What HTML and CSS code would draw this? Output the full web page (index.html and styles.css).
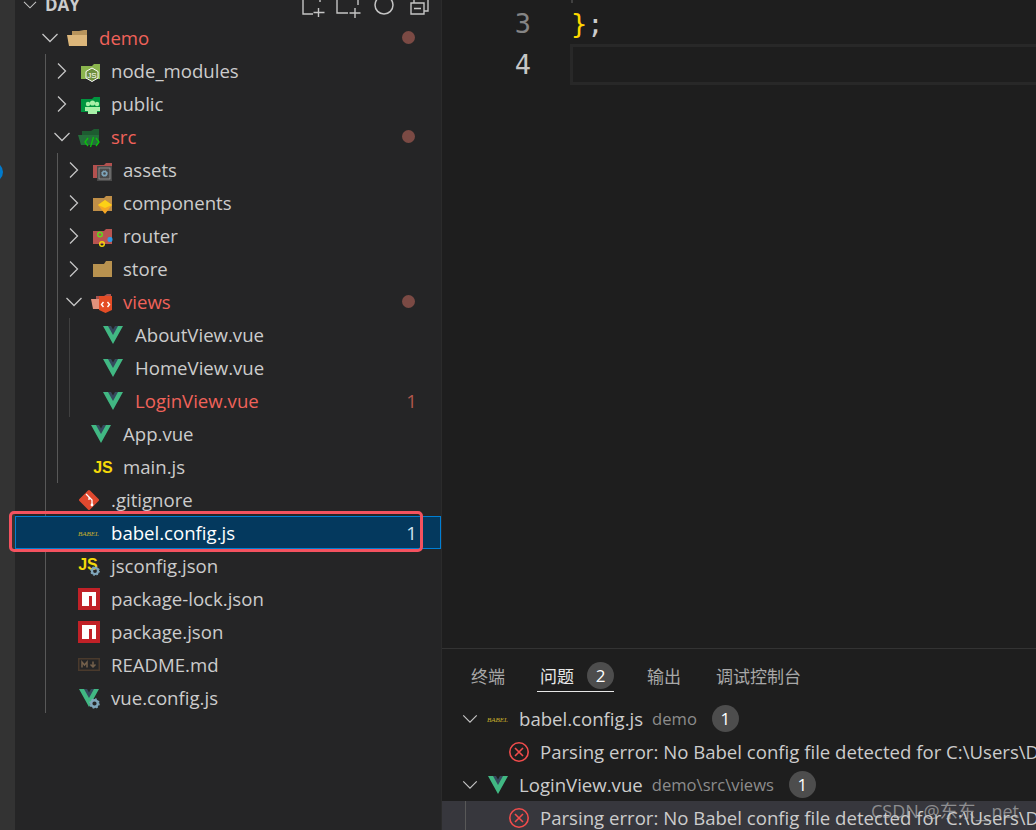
FILE: index.html
```html
<!DOCTYPE html>
<html lang="zh">
<head>
<meta charset="utf-8">
<title>VS Code</title>
<link rel="stylesheet" href="styles.css">
</head>
<body>
<svg class="defs" width="0" height="0">
  <defs>
    <symbol id="chev-r" viewBox="0 0 20 20"><path d="M6 2.5 L13.5 10 L6 17.5" fill="none" stroke="#c5c5c5" stroke-width="1.3"/></symbol>
    <symbol id="chev-d" viewBox="0 0 20 20"><path d="M2.5 6 L10 13.5 L17.5 6" fill="none" stroke="#c5c5c5" stroke-width="1.3"/></symbol>
    <symbol id="gear" viewBox="0 0 10 10"><circle cx="5" cy="5" r="3" fill="none" stroke="#7fa6bb" stroke-width="2.2"/><circle cx="5" cy="5" r="4.2" fill="none" stroke="#7fa6bb" stroke-width="1.2" stroke-dasharray="1.6 1.7"/></symbol>
    <symbol id="vue" viewBox="0 0 22 22"><path d="M1 2 H8 L11 7 L14 2 H21 L11 20 Z" fill="#41b883"/><path d="M6 2 H9 L11 5.5 L13 2 H16 L11 11 Z" fill="#35495e"/></symbol>
    <symbol id="npm" viewBox="0 0 22 22"><rect x="0" y="0" width="22" height="22" fill="#c12127"/><path d="M4 4 H18 V18 H14 V8 H11 V18 H4 Z" fill="#fff"/></symbol>
    <symbol id="err" viewBox="0 0 22 22"><circle cx="11" cy="11" r="9.2" fill="none" stroke="#f14c4c" stroke-width="1.6"/><path d="M7 7 L15 15 M15 7 L7 15" stroke="#f14c4c" stroke-width="1.6"/></symbol>
    <symbol id="babel" viewBox="0 0 22 10"><text x="0" y="8" class="babel-mark">BABEL</text></symbol>
  </defs>
</svg>
<div class="app">
  <div class="activity"><span class="activity-badge"></span></div>
  <aside class="sidebar">
    <div class="explorer-head">
      <svg class="ic20" viewBox="0 0 20 20"><use href="#chev-d"/></svg>
      <span class="explorer-title">DAY</span>
      <div class="head-actions">
        <svg class="act" viewBox="0 0 24 24"><path d="M11 21 H1 V3 H16 M18 3 V9 M16.500 15 V24 M11.500 19.500 H22.500" fill="none" stroke="#c5c5c5" stroke-width="1.400"/></svg>
        <svg class="act" viewBox="0 0 24 24"><path d="M10 20 H-1 V2 H20 V12 M17 15 V25 M11.500 20 H22.500" fill="none" stroke="#c5c5c5" stroke-width="1.400"/></svg>
        <svg class="act" viewBox="0 0 24 24"><circle cx="10" cy="12" r="9" fill="none" stroke="#c5c5c5" stroke-width="1.500"/></svg>
        <svg class="act" viewBox="0 0 24 24"><path d="M1 10 H14 V21 H1 Z M4 10 V6 H18 V18 H14 M4 15.500 H11" fill="none" stroke="#c5c5c5" stroke-width="1.400"/></svg>
      </div>
    </div>
    <div class="tree">
      <span class="guide guide-a"></span>
      <span class="guide guide-b"></span>
      <span class="guide guide-c"></span>

      <div class="row d0 err">
        <svg class="chev" viewBox="0 0 20 20"><use href="#chev-d"/></svg>
        <svg class="ficon" viewBox="0 0 22 22"><path d="M6 8 V4 H13 L18 3 H21 V19 H6 Z" fill="#b8945c"/><path d="M1 8 H21 V19 H3 Z" fill="#dcb67a"/></svg>
        <span class="name">demo</span><span class="dot"></span>
      </div>
      <div class="row d1">
        <svg class="chev" viewBox="0 0 20 20"><use href="#chev-r"/></svg>
        <svg class="ficon" viewBox="0 0 22 22"><path d="M3 6 H14 L16 4 H22 V19 H3 Z" fill="#8bb54e"/><path d="M14 8 L20 11.500 V18 L14 21.500 L8 18 V11.500 Z" fill="#6f8f3f" stroke="#fff" stroke-width="1"/><text x="14" y="18" class="node-mark">JS</text></svg>
        <span class="name">node_modules</span>
      </div>
      <div class="row d1">
        <svg class="chev" viewBox="0 0 20 20"><use href="#chev-r"/></svg>
        <svg class="ficon" viewBox="0 0 22 22"><path d="M3 6 H14 L16 4 H22 V19 H3 Z" fill="#00953f"/><g fill="#a8f0a8"><circle cx="10" cy="11" r="2.200"/><circle cx="19" cy="11" r="2.200"/><circle cx="14.500" cy="10" r="2.600"/><path d="M7 14 H22 V18 H19 V21 H10 V18 H7 Z"/></g></svg>
        <span class="name">public</span>
      </div>
      <div class="row d1 err">
        <svg class="chev" viewBox="0 0 20 20"><use href="#chev-d"/></svg>
        <svg class="ficon" viewBox="0 0 22 22"><path d="M4 7 V5 H13 L16 3 H21 V16 H4 Z" fill="#1d5c30"/><path d="M0 9 H21 L20 19 H3 Z" fill="#256e3b"/><path d="M10 12 L7 16 L10 20 M18 12 L21 16 L18 20 M15.500 11 L12.500 21" fill="none" stroke="#0bc30b" stroke-width="1.300"/></svg>
        <span class="name">src</span><span class="dot"></span>
      </div>
      <div class="row d2">
        <svg class="chev" viewBox="0 0 20 20"><use href="#chev-r"/></svg>
        <svg class="ficon" viewBox="0 0 22 22"><path d="M3 6 H14 L16 4 H22 V19 H3 Z" fill="#b3514f"/><rect x="7" y="7" width="15" height="15" fill="#4a4a4a"/><rect x="9" y="9" width="11" height="11" fill="none" stroke="#999" stroke-width=".8"/><use href="#gear" x="11" y="11" width="7" height="7"/></svg>
        <span class="name">assets</span>
      </div>
      <div class="row d2">
        <svg class="chev" viewBox="0 0 20 20"><use href="#chev-r"/></svg>
        <svg class="ficon" viewBox="0 0 22 22"><path d="M3 6 H14 L16 4 H22 V19 H3 Z" fill="#c08f48"/><path d="M15 8 L22 13 L15 22 L8 13 Z" fill="#f5a623"/><path d="M15 8 L22 13 L15 16 L8 13 Z" fill="#fcd116"/></svg>
        <span class="name">components</span>
      </div>
      <div class="row d2">
        <svg class="chev" viewBox="0 0 20 20"><use href="#chev-r"/></svg>
        <svg class="ficon" viewBox="0 0 22 22"><path d="M3 6 H14 L16 4 H22 V19 H3 Z" fill="#b85450"/><circle cx="10" cy="9.500" r="2.300" fill="none" stroke="#5fdc1e" stroke-width="1.400"/><circle cx="12" cy="19" r="2.300" fill="none" stroke="#f5d90a" stroke-width="1.400"/><rect x="17.500" y="12" width="5" height="5" rx="2" fill="#2f9be8"/></svg>
        <span class="name">router</span>
      </div>
      <div class="row d2">
        <svg class="chev" viewBox="0 0 20 20"><use href="#chev-r"/></svg>
        <svg class="ficon" viewBox="0 0 22 22"><path d="M3 6 H14 L16 3 H22 V19 H3 Z" fill="#b8924f"/></svg>
        <span class="name">store</span>
      </div>
      <div class="row d2 err">
        <svg class="chev" viewBox="0 0 20 20"><use href="#chev-d"/></svg>
        <svg class="ficon" viewBox="0 0 22 22"><path d="M6 7 V5 H14 L17 3 H21 V18 H6 Z" fill="#a95450"/><path d="M1 8 H12 V18 H3 Z" fill="#e0917c"/><path d="M9 5 H22 V19 L15.500 22 L9 19 Z" fill="#e44d26"/><path d="M13.500 11 L11.500 13.500 L13.500 16 M17.500 11 L19.500 13.500 L17.500 16" fill="none" stroke="#fff" stroke-width="1.400"/></svg>
        <span class="name">views</span><span class="dot"></span>
      </div>
      <div class="row d3"><span class="chev"></span><svg class="ficon" viewBox="0 0 22 22"><use href="#vue"/></svg><span class="name">AboutView.vue</span></div>
      <div class="row d3"><span class="chev"></span><svg class="ficon" viewBox="0 0 22 22"><use href="#vue"/></svg><span class="name">HomeView.vue</span></div>
      <div class="row d3 err"><span class="chev"></span><svg class="ficon" viewBox="0 0 22 22"><use href="#vue"/></svg><span class="name">LoginView.vue</span><span class="count">1</span></div>
      <div class="row d2"><span class="chev"></span><svg class="ficon" viewBox="0 0 22 22"><use href="#vue"/></svg><span class="name">App.vue</span></div>
      <div class="row d2"><span class="chev"></span><svg class="ficon" viewBox="0 0 22 22"><text x="13" y="17" class="js-mark">JS</text></svg><span class="name">main.js</span></div>
      <div class="row d1"><span class="chev"></span><svg class="ficon" viewBox="0 0 22 22"><rect x="3.500" y="3.500" width="15" height="15" rx="1.500" transform="rotate(45 11 11)" fill="#e0492f" /><path d="M8 5 L14 11 V16 M11 8 V11" fill="none" stroke="#fff" stroke-width="1.300"/><circle cx="14" cy="16" r="1.400" fill="#fff"/></svg><span class="name">.gitignore</span></div>
      <div class="row d1 sel"><span class="chev"></span><svg class="ficon" viewBox="0 0 22 22"><use href="#babel" x="0" y="6" width="22" height="10"/></svg><span class="name">babel.config.js</span><span class="count">1</span></div>
      <div class="row d1"><span class="chev"></span><svg class="ficon" viewBox="0 0 22 22"><text x="10" y="15" class="js-mark">JS</text><use href="#gear" x="12" y="11" width="10" height="10"/></svg><span class="name">jsconfig.json</span></div>
      <div class="row d1"><span class="chev"></span><svg class="ficon" viewBox="0 0 22 22"><use href="#npm"/></svg><span class="name">package-lock.json</span></div>
      <div class="row d1"><span class="chev"></span><svg class="ficon" viewBox="0 0 22 22"><use href="#npm"/></svg><span class="name">package.json</span></div>
      <div class="row d1"><span class="chev"></span><svg class="ficon" viewBox="0 0 22 22"><rect x=".75" y="4.750" width="20.500" height="11.500" fill="none" stroke="#4a3a2c" stroke-width="1.500"/><path d="M4 13.500 V8 L6.500 11 L9 8 V13.500 M15 7.500 V13 M12.500 10.500 L15 13 L17.500 10.500" fill="none" stroke="#75614c" stroke-width="1.500"/></svg><span class="name">README.md</span></div>
      <div class="row d1"><span class="chev"></span><svg class="ficon" viewBox="0 0 22 22"><use href="#vue"/><use href="#gear" x="11" y="11" width="11" height="11"/></svg><span class="name">vue.config.js</span></div>
    </div>
  </aside>
  <main class="main">
    <section class="editor">
      <div class="guide-stub"></div>
      <div class="code-line"><span class="ln">3</span><span class="code"><span class="brace">}</span>;</span></div>
      <div class="code-line current"><span class="ln">4</span><span class="code"></span></div>
    </section>
    <section class="panel">
      <div class="tabs">
        <span class="tab">终端</span>
        <span class="tab active">问题<span class="badge">2</span></span>
        <span class="tab">输出</span>
        <span class="tab">调试控制台</span>
      </div>
      <div class="p-row p-file">
        <svg class="p-chev" viewBox="0 0 20 20"><use href="#chev-d"/></svg>
        <svg class="ficon" viewBox="0 0 22 22"><use href="#babel" x="0" y="6" width="22" height="10"/></svg>
        <span class="p-name">babel.config.js</span><span class="p-path">demo</span><span class="badge">1</span>
      </div>
      <div class="p-row p-msg"><svg class="ficon" viewBox="0 0 22 22"><use href="#err"/></svg><span class="p-text">Parsing error: No Babel config file detected for C:\Users\D</span></div>
      <div class="p-row p-file">
        <svg class="p-chev" viewBox="0 0 20 20"><use href="#chev-d"/></svg>
        <svg class="ficon" viewBox="0 0 22 22"><use href="#vue"/></svg>
        <span class="p-name">LoginView.vue</span><span class="p-path">demo\src\views</span><span class="badge">1</span>
      </div>
      <div class="p-row p-msg p-sel"><svg class="ficon" viewBox="0 0 22 22"><use href="#err"/></svg><span class="p-text">Parsing error: No Babel config file detected for C:\Users\D</span></div>
    </section>
    <div class="watermark">CSDN @东东__net</div>
  </main>
  <div class="annotation"></div>
</div>
</body>
</html>
```
FILE: styles.css
```css
* { box-sizing: border-box; }
html, body { margin: 0; padding: 0; height: 100%; }
body {
  background: #1e1e1e;
  color: #cccccc;
  font-family: "Open Sans", "Noto Sans CJK SC", sans-serif;
  font-size: 18.6px;
  overflow: hidden;
}
.defs { position: absolute; }
.app { position: relative; display: flex; width: 1036px; height: 830px; overflow: hidden; }

.activity { position: relative; flex: 0 0 15px; background: #333333; overflow: hidden; }
.activity-badge { position: absolute; left: -17px; top: 162px; width: 20px; height: 20px; border-radius: 50%; background: #007acc; }

.sidebar { flex: 0 0 426px; background: #252526; display: flex; flex-direction: column; }
.explorer-head { display: flex; align-items: center; height: 33px; margin-top: -12px; padding-left: 7px; }
.ic20 { width: 16px; height: 16px; flex: none; }
.explorer-title { margin-left: 7px; font-weight: 700; font-size: 17px; color: #cccccc; }
.head-actions { display: flex; margin-left: auto; padding-right: 7px; gap: 12px; align-items: center; }
.act { width: 24px; height: 24px; flex: none; overflow: visible; }

.tree { position: relative; }
.guide { position: absolute; width: 1px; background: #585858; }
.guide-a { left: 30px; top: 33px; height: 659px; }
.guide-b { left: 42px; top: 132px; height: 330px; }
.guide-c { left: 54px; top: 297px; height: 99px; background: #404040; }

.row { display: flex; align-items: center; height: 33px; position: relative; white-space: nowrap; }
.d0 { padding-left: 25px; }
.d1 { padding-left: 37px; }
.d2 { padding-left: 49px; }
.d3 { padding-left: 61px; }
.chev { flex: none; width: 20px; height: 20px; }
.ficon { flex: none; width: 22px; height: 22px; margin-left: 6px; overflow: visible; }
.name { margin-left: 11px; }
.err .name { color: #f0625a; }
.dot { width: 13px; height: 13px; border-radius: 50%; background: #7b4a44; margin-left: auto; margin-right: 26px; }
.count { margin-left: auto; margin-right: 24px; color: #b3574d; }
.sel { background: #04395e; outline: 1px solid #007fd4; outline-offset: -1px; color: #ffffff; }
.sel .count { color: #cfe3f0; }

.babel-mark { font-family: "Liberation Serif", serif; font-style: italic; font-size: 7px; fill: #c9b02b; }
.js-mark { font-family: "Liberation Sans", sans-serif; font-weight: 700; font-size: 16px; fill: #f5d90a; text-anchor: middle; }
.node-mark { font-family: "Liberation Sans", sans-serif; font-size: 8px; fill: #fff; text-anchor: middle; }

.main { position: relative; flex: 1; min-width: 0; display: flex; flex-direction: column; border-left: 1px solid #2b2b2b; overflow: hidden; }
.editor { flex: 1; min-height: 0; background: #1e1e1e; font-family: "DejaVu Sans Mono", "Liberation Mono", monospace; font-size: 27px; }
.guide-stub { width: 2px; height: 3px; margin-left: 129px; background: #404040; }
.code-line { display: flex; height: 41px; line-height: 41px; }
.ln { flex: 0 0 128px; padding-right: 39px; text-align: right; color: #858585; }
.current .ln { color: #c6c6c6; }
.code { flex: 1; color: #cccccc; padding-left: 1px; }
.current .code { border: 3px solid #282828; border-right: 0; }
.brace { color: #ffd700; }

.panel { flex: 0 0 182px; min-height: 0; border-top: 1px solid #333333; background: #1e1e1e; }
.tabs { display: flex; align-items: center; height: 53px; padding-left: 29px; font-size: 17px; color: #a8a8a8; }
.tab { display: inline-flex; align-items: center; height: 33px; margin-right: 35px; white-space: nowrap; }
.tab.active { color: #e7e7e7; border-bottom: 1px solid #e7e7e7; padding: 0 0 0 3px; margin-left: -3px; margin-right: 33px; }
.badge { display: inline-flex; align-items: center; justify-content: center; width: 27px; height: 27px; border-radius: 50%; background: #4d4d4d; color: #ffffff; font-size: 17px; flex: none; }
.tab .badge { margin-left: 13px; }
.p-row { display: flex; align-items: center; height: 33px; white-space: nowrap; overflow: hidden; }
.p-chev { flex: none; width: 18px; height: 18px; margin-left: 19px; }
.p-file .ficon { margin-left: 8px; }
.p-name { margin-left: 10px; }
.p-path { margin-left: 9px; color: #8c8c8c; font-size: 16.600px; }
.p-file .badge { margin-left: 15px; }
.p-msg { padding-left: 66px; }
.p-msg .ficon { margin-left: 0; }
.p-text { margin-left: 10px; }
.p-sel { background: #37373d; position: relative; }
.p-sel::before { content: ""; position: absolute; left: 23px; top: 0; bottom: 0; width: 1px; background: #585858; }

.watermark { position: absolute; left: 429px; top: 797px; color: rgba(200, 200, 200, .6); font-size: 18px; white-space: nowrap; }
.annotation { position: absolute; left: 9px; top: 511px; width: 414px; height: 41px; border: 3px solid #f4525f; border-radius: 5px; }
```
